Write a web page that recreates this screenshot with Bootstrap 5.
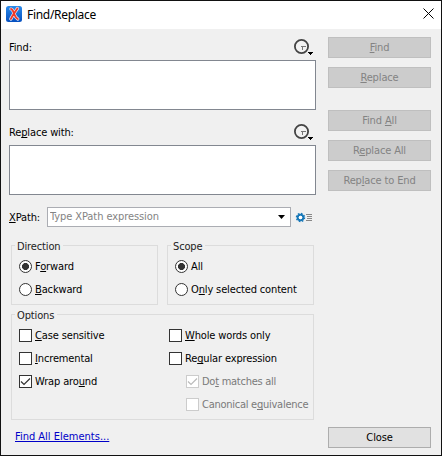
<!DOCTYPE html>
<html lang="en">
<head>
<meta charset="utf-8">
<title>Find/Replace</title>
<meta name="viewport" content="width=device-width, initial-scale=1">
<link href="https://cdn.jsdelivr.net/npm/bootstrap@5.3.0/dist/css/bootstrap.min.css" rel="stylesheet">
<style>
body{margin:0;background:#f0f0f0;font:11px/13px "DejaVu Sans Condensed","DejaVu Sans",sans-serif;letter-spacing:-.14px;color:#000;overflow:hidden}
u{text-decoration:underline;text-decoration-thickness:1px;text-underline-offset:1px;text-decoration-skip-ink:none}
svg{display:block;flex:none}
.dialog-window{width:442px;height:456px;border:1px solid #111}
.title-bar{height:28px;background:#fff;padding:0 7px 0 5px}
.title-text{font:12px/16px "Noto Sans",sans-serif;letter-spacing:-.3px;margin-left:5px}
.title-bar .app-icon{margin-top:-3px}
.title-bar .title-text{margin-top:-1px}
.title-bar .close-icon{margin-top:-4px}
.dialog-body{height:426px;padding:8px 10px 0 8px}
.left-col{width:307px}
.right-col{width:103px;margin-left:12px}
.right-col .push-btn+.push-btn{margin-top:9px}
.right-col .second+.push-btn{margin-top:22px}
.label-row{height:23px;padding:2px 2px 0 0}
.label-row label{padding-top:2px}
.replace-row{margin-top:12px}
.form-control.text-box{height:50px;min-height:0;border:1px solid #828790;border-radius:0;background:#fff;padding:2px;resize:none}
.xpath-row{margin-top:12px;height:20px}
.xpath-combo{width:244px;height:20px;border:1px solid #abadb3;background:#fff;margin-left:7px;padding:0 5px 0 2px}
.xpath-combo input{font:inherit;letter-spacing:-.08px;line-height:18px;height:18px;width:200px;border:0;outline:0;padding:0;background:none}
.xpath-combo input::placeholder{color:#838383;opacity:1}
.push-btn,.push-btn:disabled{--bs-btn-padding-y:0;--bs-btn-padding-x:0;font:inherit;letter-spacing:inherit;height:21px;border-radius:0;border:1px solid #bfbfbf;background:#ccc;color:#838383;opacity:1;width:103px;line-height:18px}
.push-btn.enabled{background:#e1e1e1;border-color:#adadad;color:#000}
.group-box{border:1px solid #dcdcdc;height:60px;padding:13px 0 0 7px}
.group-name{height:13px;margin:-19px 0 5px -4px;padding:0 3px 0 2px;background:#f0f0f0;width:max-content;color:#222}
.groups{margin:18px 0 0 2px;gap:9px}
.groups .group-box{width:147px}
.options-box{margin:9px 0 0 2px;width:303px;height:106px}
.options-box .group-name{margin-bottom:2px}
.groups .group-name{margin-bottom:2px}
.option-row{height:23px}
.option-row .form-check-input{margin:0;width:13px;height:13px;border:1px solid #333;background-color:#fff;flex:none;box-shadow:none}
.option-row .form-check-input[type=checkbox]{border-radius:0}
.option-row .form-check-input[type=radio]:checked{background-image:radial-gradient(circle,#333 0 3.2px,transparent 3.8px);background-size:100%}
.option-row .form-check-input[type=checkbox]:checked{background-image:url("data:image/svg+xml,%3Csvg xmlns='http://www.w3.org/2000/svg' viewBox='0 0 11 11'%3E%3Cpath d='M1 5.5 4 8.5 10 2.5' fill='none' stroke='%23333' stroke-width='1.2'/%3E%3C/svg%3E");background-size:100%}
.option-row .form-check-input:disabled{border-color:#ccc;opacity:1}
.option-row .form-check-input[type=checkbox]:checked:disabled{background-image:url("data:image/svg+xml,%3Csvg xmlns='http://www.w3.org/2000/svg' viewBox='0 0 11 11'%3E%3Cpath d='M1 5.5 4 8.5 10 2.5' fill='none' stroke='%23bbb' stroke-width='1.2'/%3E%3C/svg%3E");background-size:100%}
.option-row label,.option-row .form-check-input:disabled~label{margin-left:3px;opacity:1;white-space:nowrap}
.option-row .form-check-input:disabled~label{color:#7a7a7a;letter-spacing:-.26px}
.sub-option{padding-left:17px}
.options-left{width:150px}
.bottom-row{height:21px;margin:7px 0 0 5px}
.bottom-row a{color:#0000c8;letter-spacing:0;text-decoration-thickness:1px;text-underline-offset:1px;text-decoration-skip-ink:none;margin:-2px 0 0 1px}
</style>
<script src="https://cdn.jsdelivr.net/npm/bootstrap@5.3.0/dist/js/bootstrap.bundle.min.js"></script>
</head>
<body>
<svg class="d-none">
  <symbol id="history" viewBox="0 0 20 18">
    <circle cx="7.5" cy="7.5" r="6.6" fill="#f2f2f2" stroke="#444" stroke-width="1.8"/>
    <path d="M7 7.500h5M8.500 7v4" fill="none" stroke="#777" stroke-width="1"/>
    <path d="M14 13h5v1h-1v1h-1v1h-1v-1h-1v-1h-1z" fill="#000"/>
  </symbol>
</svg>
<div class="dialog-window">
  <header class="title-bar d-flex align-items-center">
    <svg class="app-icon" width="16" height="16" viewBox="0 0 16 16"><defs><linearGradient id="blue" x2="0" y2="1"><stop stop-color="#2b8bea"/><stop offset="1" stop-color="#0650c0"/></linearGradient></defs><rect width="16" height="16" rx="2.500" fill="url(#blue)"/><path d="M5 3c2 .3 2.400 3.300 3.300 5.300.8 2 1.600 3.700 3.500 4.700M11.500 2.500C9.500 5.500 6.500 9 4.800 13" fill="none" stroke="#e6e6f5" stroke-width="3.200" stroke-linecap="round"/><path d="M5 3c2 .3 2.400 3.300 3.300 5.300.8 2 1.600 3.700 3.500 4.700M11.500 2.500C9.500 5.500 6.500 9 4.800 13" fill="none" stroke="#f03a28" stroke-width="1.800" stroke-linecap="round"/></svg>
    <span class="title-text">Find/Replace</span>
    <svg class="close-icon ms-auto" width="11" height="11" viewBox="0 0 11 11"><path d="M.5.5l10 10M10.500.5l-10 10" stroke="#000" stroke-width="1"/></svg>
  </header>
  <main class="dialog-body">
    <div class="d-flex">
      <div class="left-col">
        <div class="label-row d-flex justify-content-between"><label for="find">Find:</label><svg width="20" height="18"><use href="#history"/></svg></div>
        <textarea id="find" class="form-control text-box"></textarea>
        <div class="label-row replace-row d-flex justify-content-between"><label for="replace">Re<u>p</u>lace with:</label><svg width="20" height="18"><use href="#history"/></svg></div>
        <textarea id="replace" class="form-control text-box"></textarea>
        <div class="xpath-row d-flex align-items-center">
          <label for="xpath"><u>X</u>Path:</label>
          <div class="xpath-combo d-flex align-items-center justify-content-between">
            <input id="xpath" type="text" placeholder="Type XPath expression">
            <svg width="7" height="4" viewBox="0 0 7 4"><path d="M0 0h7L3.500 4z"/></svg>
          </div>
          <svg class="ms-1" width="18" height="11" viewBox="0 0 18 11"><g fill="none" stroke="#1878b8"><circle cx="5.500" cy="5.500" r="2.800" stroke-width="2"/><circle cx="5.500" cy="5.500" r="4" stroke-width="1.400" stroke-dasharray="1.570 1.570"/></g><circle cx="5.500" cy="5.500" r="1.700" fill="#fff"/><path d="M11 2.500h6M12 4.500h5M12 6.500h5M11 8.500h6" stroke="#888" stroke-width="1"/></svg>
        </div>
      </div>
      <div class="right-col d-flex flex-column">
        <button class="btn push-btn" disabled><u>F</u>ind</button>
        <button class="btn push-btn second" disabled><u>R</u>eplace</button>
        <button class="btn push-btn" disabled>Find <u>A</u>ll</button>
        <button class="btn push-btn" disabled>R<u>e</u>place All</button>
        <button class="btn push-btn" disabled>Rep<u>l</u>ace to End</button>
      </div>
    </div>
    <div class="groups d-flex">
      <section class="group-box">
        <div class="group-name">Direction</div>
        <div class="option-row d-flex align-items-center"><input class="form-check-input" type="radio" name="dir" id="fw" checked><label for="fw">F<u>o</u>rward</label></div>
        <div class="option-row d-flex align-items-center"><input class="form-check-input" type="radio" name="dir" id="bw"><label for="bw"><u>B</u>ackward</label></div>
      </section>
      <section class="group-box">
        <div class="group-name">Scope</div>
        <div class="option-row d-flex align-items-center"><input class="form-check-input" type="radio" name="scope" id="all" checked><label for="all">All</label></div>
        <div class="option-row d-flex align-items-center"><input class="form-check-input" type="radio" name="scope" id="sel"><label for="sel">O<u>n</u>ly selected content</label></div>
      </section>
    </div>
    <section class="group-box options-box">
      <div class="group-name">Options</div>
      <div class="d-flex">
        <div class="options-left">
          <div class="option-row d-flex align-items-center"><input class="form-check-input" type="checkbox" id="cs"><label for="cs"><u>C</u>ase sensitive</label></div>
          <div class="option-row d-flex align-items-center"><input class="form-check-input" type="checkbox" id="inc"><label for="inc"><u>I</u>ncremental</label></div>
          <div class="option-row d-flex align-items-center"><input class="form-check-input" type="checkbox" id="wrap" checked><label for="wrap">Wrap aro<u>u</u>nd</label></div>
        </div>
        <div>
          <div class="option-row d-flex align-items-center"><input class="form-check-input" type="checkbox" id="whole"><label for="whole"><u>W</u>hole words only</label></div>
          <div class="option-row d-flex align-items-center"><input class="form-check-input" type="checkbox" id="regex"><label for="regex">Re<u>g</u>ular expression</label></div>
          <div class="option-row sub-option d-flex align-items-center"><input class="form-check-input" type="checkbox" id="dot" checked disabled><label for="dot">Do<u>t</u> matches all</label></div>
          <div class="option-row sub-option d-flex align-items-center"><input class="form-check-input" type="checkbox" id="canon" disabled><label for="canon">Canonical e<u>q</u>uivalence</label></div>
        </div>
      </div>
    </section>
    <div class="bottom-row d-flex justify-content-between align-items-center"><a href="#">Find All Elements...</a><button class="btn push-btn enabled">Close</button></div>
  </main>
</div>
</body>
</html>
